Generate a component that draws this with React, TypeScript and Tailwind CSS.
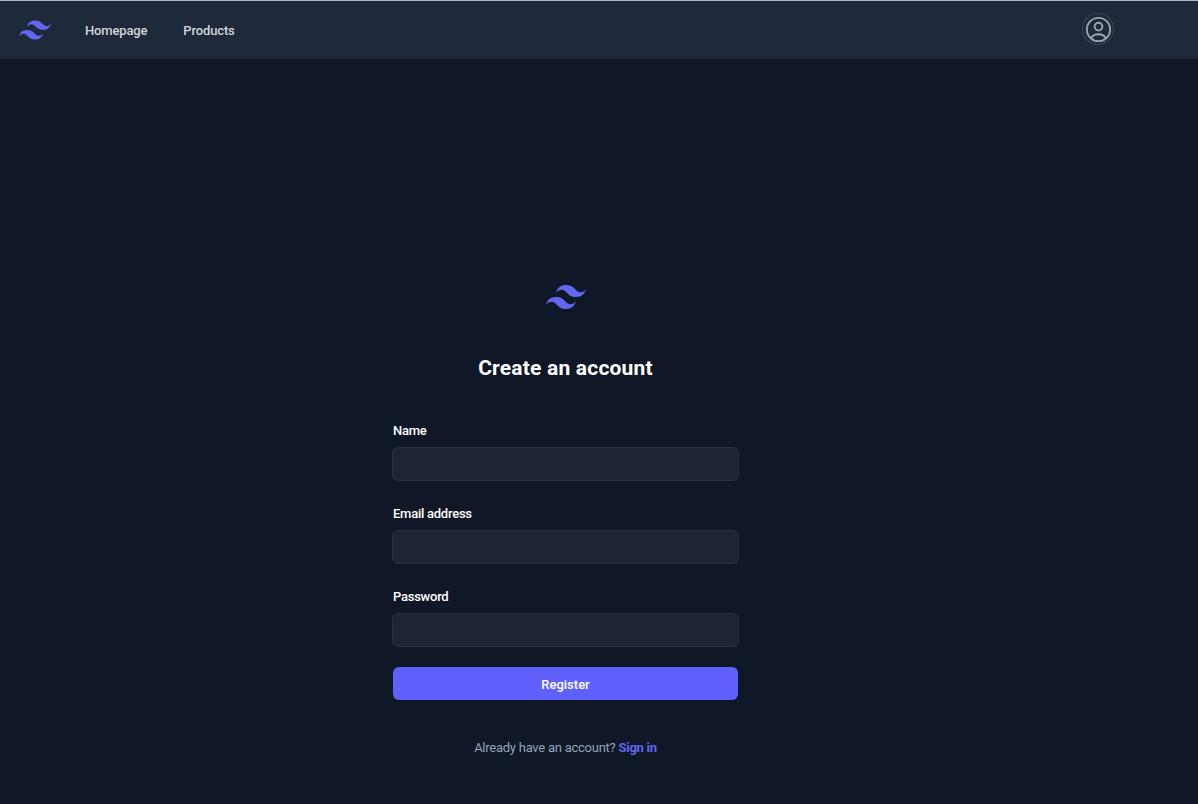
const logoPath = "M24 9.6c-6.4 0-10.4 3.2-12 9.6 2.4-3.2 5.2-4.4 8.4-3.6 1.826.456 3.13 1.781 4.575 3.247C27.329 21.236 30.058 24 36 24c6.4 0 10.4-3.2 12-9.6-2.4 3.2-5.2 4.4-8.4 3.6-1.826-.456-3.13-1.781-4.575-3.247C32.671 12.364 29.942 9.6 24 9.6zM12 24c-6.4 0-10.4 3.2-12 9.6 2.4-3.2 5.2-4.4 8.4-3.6 1.826.456 3.13 1.781 4.575 3.247C15.329 35.636 18.058 38.4 24 38.4c6.4 0 10.4-3.2 12-9.6-2.4 3.2-5.2 4.4-8.4 3.6-1.826-.456-3.13-1.781-4.575-3.247C20.671 26.364 17.942 24 12 24z";

function Logo({ className }: { className: string }) {
  return (
    <svg viewBox="0 0 48 48" className={className} fill="#6366f1" aria-hidden="true">
      <path d={logoPath} />
    </svg>
  );
}

function Field({ label, type }: { label: string; type: string }) {
  return (
    <div>
      <label className="block pl-px pt-px text-[13px] font-medium leading-6 tracking-[-0.25px] text-white">{label}</label>
      <input
        type={type}
        className="mt-[4px] block h-[34px] w-full rounded-md border border-[#2a3140] bg-[#1e2431] px-3 text-white outline-none"
      />
    </div>
  );
}

export default function App() {
  return (
    <div className="flex h-[804px] flex-col overflow-hidden bg-[#101726] font-['Roboto','Noto_Sans',sans-serif]">
      <header className="flex h-[59px] shrink-0 items-center border-t border-[#aab4c2] bg-[#1e293b] pl-[19px] pr-[84px]">
        <Logo className="h-8 w-8" />
        <nav className="ml-[34px] flex gap-9 pt-[2px] text-[13px] font-medium tracking-[-0.15px] text-[#d1d5db]">
          <a>Homepage</a>
          <a>Products</a>
        </nav>
        <button className="mb-[2px] ml-auto flex h-8 w-8 items-center justify-center rounded-full ring-1 ring-inset ring-[#3b4656]">
          <svg viewBox="0 0 24 24" className="h-[31px] w-[31px]" fill="none" stroke="#9ca3af" strokeWidth="1.5" aria-hidden="true">
            <path strokeLinecap="round" strokeLinejoin="round" d="M17.982 18.725A7.488 7.488 0 0 0 12 15.75a7.488 7.488 0 0 0-5.982 2.975m11.963 0a9 9 0 1 0-11.963 0m11.963 0A8.966 8.966 0 0 1 12 21a8.966 8.966 0 0 1-5.982-2.275M15 9.75a3 3 0 1 1-6 0 3 3 0 0 1 6 0Z" />
          </svg>
        </button>
      </header>
      <main className="flex flex-1 justify-center pr-[67px] pt-[218px]">
        <div className="w-[347px]">
          <div className="flex flex-col items-center">
            <Logo className="h-10 w-10" />
            <h2 className="mt-[33px] text-[21px] font-bold leading-9 tracking-[0.2px] text-white">Create an account</h2>
          </div>
          <form className="mt-[32px] flex flex-col gap-[20px]">
            <Field label="Name" type="text" />
            <Field label="Email address" type="email" />
            <Field label="Password" type="password" />
            <button type="button" className="mx-px h-[33px] rounded-md bg-[#6060ff] pt-[2px] text-[13px] font-medium text-white">
              Register
            </button>
          </form>
          <p className="mt-[36px] text-center text-[13px] leading-6 tracking-[-0.25px] text-[#94a3b8]">
            Already have an account? <a className="font-bold text-[#6366f1]">Sign in</a>
          </p>
        </div>
      </main>
    </div>
  );
}
